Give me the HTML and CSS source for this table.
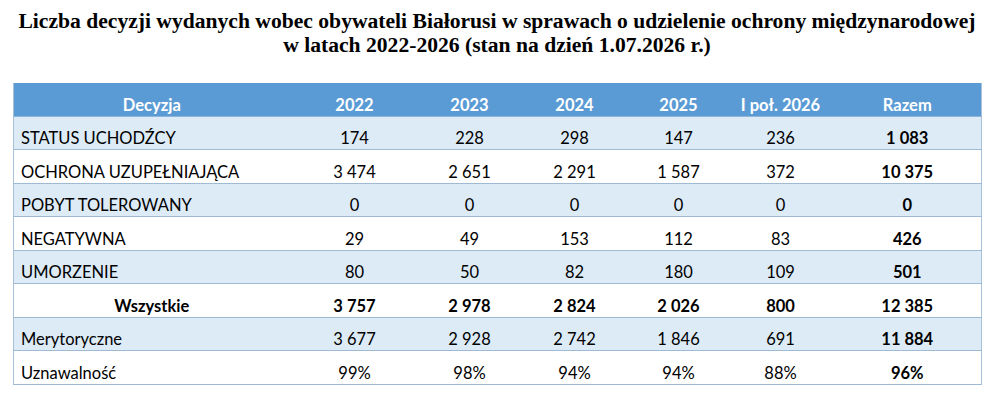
FILE: index.html
```html
<!DOCTYPE html>
<html lang="pl">
<head>
<meta charset="utf-8">
<title>Liczba decyzji</title>
<link rel="stylesheet" href="styles.css">
</head>
<body>
<div class="page">
  <h1 class="title">Liczba decyzji wydanych wobec obywateli Białorusi w sprawach o udzielenie ochrony międzynarodowej<br>w latach 2022-2026 (stan na dzień 1.07.2026 r.)</h1>
  <table class="data">
    <colgroup>
      <col class="c-label"><col class="c-2022"><col class="c-2023"><col class="c-2024"><col class="c-2025"><col class="c-2026"><col class="c-sum">
    </colgroup>
    <thead>
      <tr><th>Decyzja</th><th>2022</th><th>2023</th><th>2024</th><th>2025</th><th>I poł. 2026</th><th>Razem</th></tr>
    </thead>
    <tbody>
      <tr class="alt"><td class="label">STATUS UCHODŹCY</td><td>174</td><td>228</td><td>298</td><td>147</td><td>236</td><td class="sum">1 083</td></tr>
      <tr><td class="label">OCHRONA UZUPEŁNIAJĄCA</td><td>3 474</td><td>2 651</td><td>2 291</td><td>1 587</td><td>372</td><td class="sum">10 375</td></tr>
      <tr class="alt"><td class="label">POBYT TOLEROWANY</td><td>0</td><td>0</td><td>0</td><td>0</td><td>0</td><td class="sum">0</td></tr>
      <tr><td class="label">NEGATYWNA</td><td>29</td><td>49</td><td>153</td><td>112</td><td>83</td><td class="sum">426</td></tr>
      <tr class="alt"><td class="label">UMORZENIE</td><td>80</td><td>50</td><td>82</td><td>180</td><td>109</td><td class="sum">501</td></tr>
      <tr class="total"><td class="label center">Wszystkie</td><td>3 757</td><td>2 978</td><td>2 824</td><td>2 026</td><td>800</td><td class="sum">12 385</td></tr>
      <tr class="alt"><td class="label">Merytoryczne</td><td>3 677</td><td>2 928</td><td>2 742</td><td>1 846</td><td>691</td><td class="sum">11 884</td></tr>
      <tr><td class="label">Uznawalność</td><td>99%</td><td>98%</td><td>94%</td><td>94%</td><td>88%</td><td class="sum">96%</td></tr>
    </tbody>
  </table>
</div>
</body>
</html>
```
FILE: styles.css
```css
html, body {
  margin: 0;
  padding: 0;
  background: #ffffff;
}

.page {
  padding: 8.5px 19px 0 13px;
}

.title {
  margin: 0 0 26.5px 0;
  font-family: "Liberation Serif", "Times New Roman", serif;
  font-weight: bold;
  font-size: 21.6px;
  line-height: 24px;
  text-align: center;
  white-space: nowrap;
  color: #000;
}

.data {
  width: 968px;
  border-collapse: collapse;
  table-layout: fixed;
  font-family: Lato, "Noto Sans", sans-serif;
  font-size: 16.5px;
  color: #000;
  border-left: 1px solid #a9c2da;
  border-right: 1px solid #a9c2da;
}

.c-label { width: 276px; }
.c-2022 { width: 130px; }
.c-2023 { width: 100px; }
.c-2024 { width: 110px; }
.c-2025 { width: 98px; }
.c-2026 { width: 106px; }
.c-sum { width: 148px; }

.data th {
  background: #5b9bd5;
  color: #ffffff;
  font-weight: bold;
  height: 33px;
  padding: 0 0 1px 0;
  vertical-align: bottom;
  text-align: center;
  border-bottom: 1px solid #8fb4d8;
  box-sizing: border-box;
}

.data td {
  height: 33.5px;
  padding: 0 0 1px 0;
  vertical-align: bottom;
  text-align: center;
  border-bottom: 1px solid #9fbad4;
  box-sizing: border-box;
}

.data tr.alt td {
  background: #ddebf7;
}

.data td.label {
  text-align: left;
  padding-left: 7px;
}

.data td.label.center {
  text-align: center;
  padding-left: 0;
}

.data td.sum,
.data tr.total td {
  font-weight: bold;
}
```
